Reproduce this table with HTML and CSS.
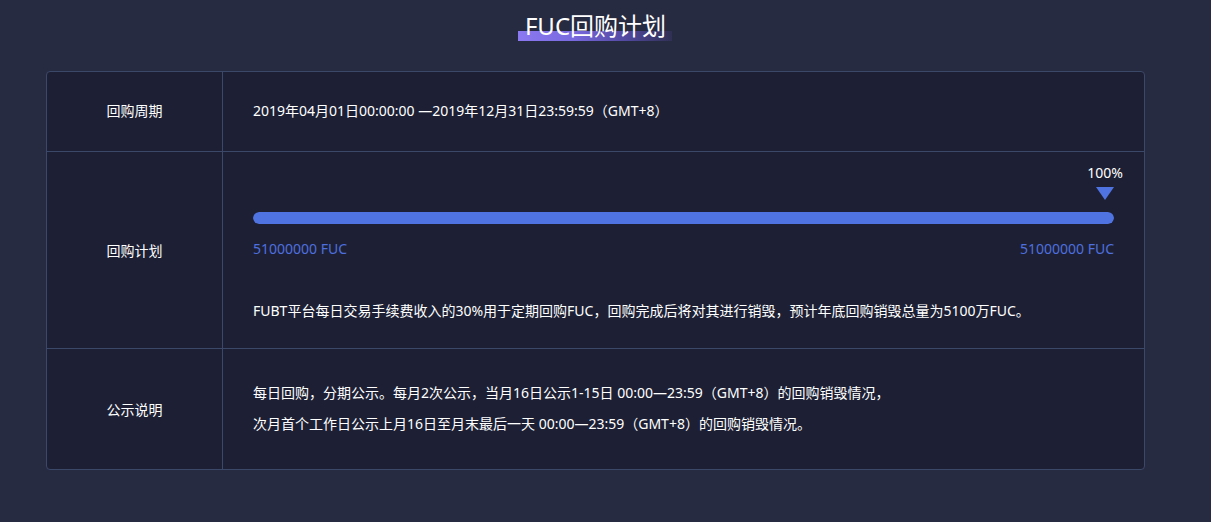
FILE: index.html
```html
<!DOCTYPE html>
<html lang="zh-CN">
<head>
<meta charset="utf-8">
<title>FUC回购计划</title>
<link rel="stylesheet" href="styles.css">
</head>
<body>
<div class="page">
  <h1 class="title"><span class="title-text">FUC回购计划</span></h1>
  <div class="table">
    <div class="cell label row1">回购周期</div>
    <div class="cell value row1">2019年04月01日00:00:00 —2019年12月31日23:59:59（GMT+8）</div>

    <div class="cell label row2">回购计划</div>
    <div class="cell value row2 plan">
      <div class="marker-row">
        <div class="marker">
          <span class="marker-text">100%</span>
          <span class="marker-arrow"></span>
        </div>
      </div>
      <div class="bar"><div class="bar-fill" style="width:100%"></div></div>
      <div class="bar-labels"><span>51000000 FUC</span><span>51000000 FUC</span></div>
      <p class="desc">FUBT平台每日交易手续费收入的30%用于定期回购FUC，回购完成后将对其进行销毁，预计年底回购销毁总量为5100万FUC。</p>
    </div>

    <div class="cell label row3">公示说明</div>
    <div class="cell value row3 notice">
      <p>每日回购，分期公示。每月2次公示，当月16日公示1-15日 00:00—23:59（GMT+8）的回购销毁情况，</p>
      <p>次月首个工作日公示上月16日至月末最后一天 00:00—23:59（GMT+8）的回购销毁情况。</p>
    </div>
  </div>
</div>
</body>
</html>
```

FILE: styles.css
```css
* { box-sizing: border-box; }
html, body {
  margin: 0;
  padding: 0;
  background: #272b42;
  color: #ffffff;
  font-family: "Noto Sans", "Noto Sans CJK SC", sans-serif;
  font-size: 14px;
}
.page {
  width: 1211px;
  height: 522px;
  padding-top: 10px;
}
.title {
  margin: 0;
  height: 61px;
  display: flex;
  justify-content: center;
  font-weight: 400;
  font-size: 24px;
  line-height: 32px;
  padding-right: 20px;
}
.title-text {
  position: relative;
  display: inline-block;
  height: 32px;
  padding: 0;
  isolation: isolate;
}
.title-text::before {
  content: "";
  position: absolute;
  left: -7px;
  right: -6px;
  top: 21px;
  height: 10px;
  background: linear-gradient(90deg, #8a79f0 0%, #7a6ae0 35%, rgba(100, 85, 200, 0.7) 70%, rgba(60, 55, 110, 0.4) 100%);
  z-index: -1;
}

.table {
  margin-left: 46px;
  width: 1099px;
  display: grid;
  grid-template-columns: 176px 1fr;
  grid-template-rows: 80px 197px 120px;
  border: 1px solid #3b4868;
  border-radius: 4px;
  background: #1d2034;
  overflow: hidden;
}
.cell {
  display: flex;
  align-items: center;
}
.label {
  justify-content: center;
  border-right: 1px solid #3b4868;
}
.row1, .row2 { border-bottom: 1px solid #3b4868; }
.row1 { padding-bottom: 3px; }
.value {
  padding-left: 30px;
  padding-right: 30px;
}
.plan {
  flex-direction: column;
  align-items: stretch;
  justify-content: flex-start;
  padding-top: 11px;
}
.marker-row {
  display: flex;
  justify-content: flex-end;
  margin-right: -11px;
}
.marker {
  width: 40px;
  display: flex;
  flex-direction: column;
  align-items: center;
}
.marker-text {
  line-height: 20px;
}
.marker-arrow {
  margin-top: 4px;
  width: 0;
  height: 0;
  border-left: 9px solid transparent;
  border-right: 9px solid transparent;
  border-top: 13px solid #4f73e0;
}
.bar {
  margin-top: 12px;
  height: 12px;
  border-radius: 6px;
  background: #2c3350;
  overflow: hidden;
}
.bar-fill {
  height: 100%;
  border-radius: 6px;
  background: #4f73e0;
}
.bar-labels {
  margin-top: 15px;
  display: flex;
  justify-content: space-between;
  color: #4d6fdf;
  line-height: 20px;
}
.desc {
  margin: 42px 0 0 0;
  line-height: 20px;
}
.notice {
  flex-direction: column;
  align-items: flex-start;
  justify-content: center;
  padding-bottom: 2px;
}
.notice p {
  margin: 0;
  line-height: 31px;
}
```
